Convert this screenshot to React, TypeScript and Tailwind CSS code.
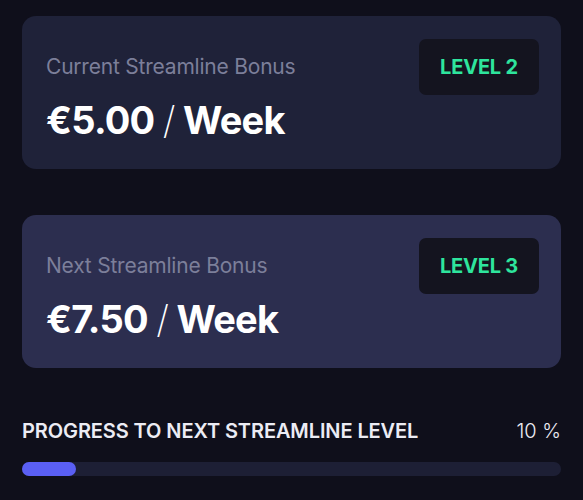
export default function App() {
    const cards = [
        { label: 'Current Streamline Bonus', value: '€5.00', level: 'LEVEL 2', bg: 'bg-[#1f2239]' },
        { label: 'Next Streamline Bonus', value: '€7.50', level: 'LEVEL 3', bg: 'bg-[#2c2e4f]' },
    ];
    const progress = 10;

    return (
        <div
            className="min-h-screen w-full bg-[#0f0f1b] px-[22px] pt-4"
            style={{ fontFamily: 'Inter, "Noto Sans", sans-serif' }}
        >
            <div className="flex flex-col gap-[46px]">
                {cards.map((card) => (
                    <div
                        key={card.label}
                        className={`${card.bg} flex h-[153px] justify-between rounded-[14px] pl-6 pr-[22px] pt-[23px]`}
                    >
                        <div className="flex flex-col pt-[17px]">
                            <span className="text-[21px] leading-none tracking-[-0.01em] text-[#7c7f9a]">
                                {card.label}
                            </span>
                            <span className="mt-[24px] text-[38px] font-bold leading-none tracking-[-0.02em] text-white">
                                {card.value} <span className="font-extralight">/</span> Week
                            </span>
                        </div>
                        <div className="flex h-[56px] w-[120px] items-center justify-center rounded-[7px] bg-[#14141f]">
                            <span className="text-[20px] font-bold tracking-[-0.01em] text-[#2ee59d]">
                                {card.level}
                            </span>
                        </div>
                    </div>
                ))}
            </div>

            <div className="mt-[48px] flex items-center justify-between">
                <span className="text-[20px] font-semibold tracking-[-0.005em] text-[#ececf4]">
                    PROGRESS TO NEXT STREAMLINE LEVEL
                </span>
                <span className="text-[20px] font-light text-[#ececf4]">{progress} %</span>
            </div>
            <div className="mt-[16px] h-[14px] w-full rounded-full bg-[#1d1f35]">
                <div className="h-full rounded-full bg-[#5a5ff4]" style={{ width: `${progress}%` }} />
            </div>
        </div>
    );
}
